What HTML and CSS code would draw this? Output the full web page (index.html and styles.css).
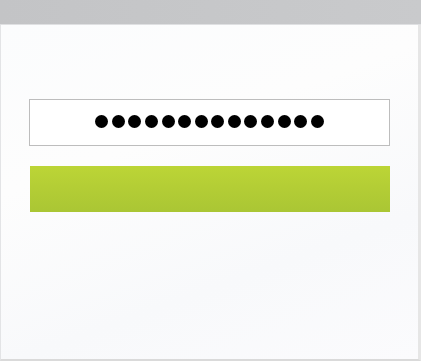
FILE: index.html
```html
<!DOCTYPE html>
<html>
<head>
<meta charset="utf-8">
<link rel="stylesheet" href="styles.css">
</head>
<body>
<div class="window">
  <div class="titlebar"></div>
  <div class="content">
    <div class="password-field" aria-label="password">
      <span class="dot"></span><span class="dot"></span><span class="dot"></span><span class="dot"></span><span class="dot"></span><span class="dot"></span><span class="dot"></span><span class="dot"></span><span class="dot"></span><span class="dot"></span><span class="dot"></span><span class="dot"></span><span class="dot"></span><span class="dot"></span>
    </div>
    <div class="submit"></div>
  </div>
</div>
</body>
</html>
```
FILE: styles.css
```css
html, body {
  margin: 0;
  padding: 0;
  background: #ffffff;
  font-family: "Liberation Sans", Arial, sans-serif;
}
.window {
  width: 421px;
  height: 361px;
  display: flex;
  flex-direction: column;
  overflow: hidden;
}
.titlebar {
  height: 24px;
  flex: none;
  background: linear-gradient(90deg, #c3c4c6 0%, #c6c7c9 50%, #c9cacc 100%);
  border-bottom: 1px solid #dfe0e2;
}
.content {
  flex: 1;
  box-sizing: border-box;
  border-left: 1px solid #e3e4e6;
  border-right: 3px solid #e6e6e6;
  border-bottom: 2px solid #dadada;
  background: linear-gradient(160deg, #fbfcfd 0%, #fdfdfd 35%, #f8f9fb 70%, #fbfbfd 100%);
  padding: 74px 28px 0 28px;
  display: flex;
  flex-direction: column;
  gap: 20px;
}
.password-field {
  box-sizing: border-box;
  width: 361px;
  height: 47px;
  border: 1px solid #bdbdbd;
  background: #ffffff;
  display: flex;
  align-items: center;
  justify-content: center;
  gap: 3.6px;
  padding-bottom: 3px;
}
.dot {
  width: 13px;
  height: 13px;
  border-radius: 50%;
  background: #000000;
  flex: none;
}
.submit {
  box-sizing: border-box;
  margin-left: 1px;
  width: 360px;
  height: 46px;
  background: linear-gradient(180deg, #bcd536 0%, #b3cd35 50%, #aac634 100%);
}
```
